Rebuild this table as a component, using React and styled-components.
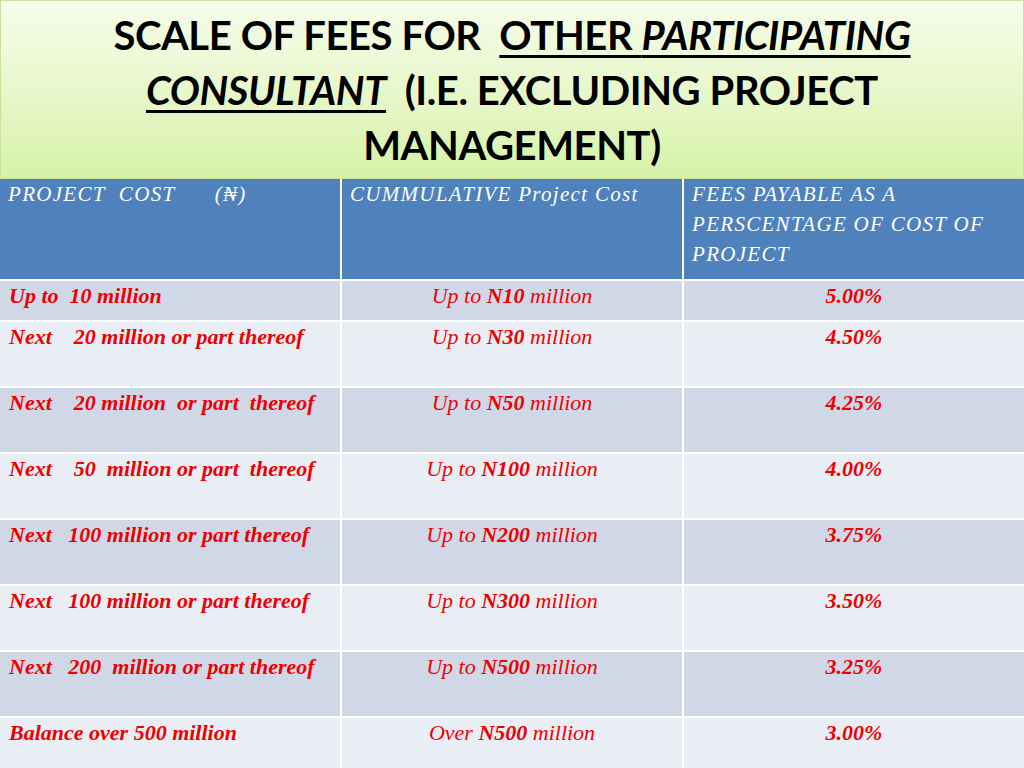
import React from "react";
import styled, { createGlobalStyle } from "styled-components";

const GlobalStyle = createGlobalStyle`
  html, body {
    margin: 0;
    padding: 0;
    background: #ffffff;
  }
  body {
    width: 1024px;
    height: 768px;
    overflow: hidden;
  }
`;

const rows = [
  { label: "Up to  10 million", amount: "10", prefix: "Up to", pct: "5.00%" },
  { label: "Next    20 million or part thereof", amount: "30", prefix: "Up to", pct: "4.50%" },
  { label: "Next    20 million  or part  thereof", amount: "50", prefix: "Up to", pct: "4.25%" },
  { label: "Next    50  million or part  thereof", amount: "100", prefix: "Up to", pct: "4.00%" },
  { label: "Next   100 million or part thereof", amount: "200", prefix: "Up to", pct: "3.75%" },
  { label: "Next   100 million or part thereof", amount: "300", prefix: "Up to", pct: "3.50%" },
  { label: "Next   200  million or part thereof", amount: "500", prefix: "Up to", pct: "3.25%" },
  { label: "Balance over 500 million", amount: "500", prefix: "Over", pct: "3.00%" },
];

const App = () => {
  return (
    <>
      <GlobalStyle />
      <Slide>
        <TitleBox>
          <Title>
            SCALE OF FEES FOR&nbsp; <U>OTHER <I>PARTICIPATING</I></U>
            <br />
            <U>
              <I>CONSULTANT</I>
            </U>
            &nbsp; (I.E. EXCLUDING PROJECT
            <br />
            MANAGEMENT)
          </Title>
        </TitleBox>
        <Table>
          <HeadCell>PROJECT&nbsp; COST&nbsp;&nbsp;&nbsp;&nbsp;&nbsp; (₦)</HeadCell>
          <HeadCell>CUMMULATIVE Project Cost</HeadCell>
          <HeadCell $wide>FEES PAYABLE AS A PERSCENTAGE OF COST OF PROJECT</HeadCell>
          {rows.map((row, idx) => (
            <React.Fragment key={idx}>
              <LabelCell $dark={idx % 2 === 0}>{row.label}</LabelCell>
              <AmountCell $dark={idx % 2 === 0}>
                {row.prefix} <b>N{row.amount}</b> million
              </AmountCell>
              <PctCell $dark={idx % 2 === 0}>{row.pct}</PctCell>
            </React.Fragment>
          ))}
        </Table>
      </Slide>
    </>
  );
};

export default App;

const Slide = styled.div`
  width: 1024px;
  height: 768px;
  display: flex;
  flex-direction: column;
  overflow: hidden;
`;

const TitleBox = styled.div`
  height: 179px;
  flex-shrink: 0;
  box-sizing: border-box;
  border: 1px solid #c8e29a;
  background: linear-gradient(180deg, #f6fcea 0%, #e6f7c8 55%, #d6f2a8 100%);
  display: flex;
  justify-content: center;
  padding-top: 7px;
`;

const Title = styled.h1`
  margin: 0;
  font-family: Lato, "Open Sans", sans-serif;
  font-weight: 700;
  font-size: 40px;
  line-height: 55px;
  text-align: center;
  color: #000000;
  letter-spacing: -0.4px;
`;

const U = styled.span`
  text-decoration: underline;
  text-decoration-thickness: 3px;
  text-underline-offset: 5px;
`;

const I = styled.span`
  font-style: italic;
`;

const Table = styled.div`
  display: grid;
  grid-template-columns: 340px 340px 1fr;
  grid-template-rows: 100px 39px repeat(6, 64px) 1fr;
  column-gap: 2px;
  row-gap: 2px;
  background: #ffffff;
  width: 1024px;
  flex: 1;
`;

const HeadCell = styled.div`
  background: #4f81bd;
  color: #ffffff;
  font-family: "Liberation Serif", serif;
  font-style: italic;
  font-size: 21px;
  line-height: 30px;
  letter-spacing: 1.3px;
  padding: ${(p) => (p.$wide ? "0 30px 0 8px" : "0 0 0 8px")};
  white-space: pre-wrap;
`;

const BodyCell = styled.div`
  background: ${(p) => (p.$dark ? "#d0d8e8" : "#e9edf4")};
  color: #ee0000;
  font-family: "Liberation Serif", serif;
  font-style: italic;
  font-size: 22px;
  line-height: 24px;
  padding-top: 3px;
  white-space: pre;
`;

const LabelCell = styled(BodyCell)`
  font-weight: 700;
  padding-left: 9px;
`;

const AmountCell = styled(BodyCell)`
  text-align: center;
  b {
    font-weight: 700;
  }
`;

const PctCell = styled(BodyCell)`
  text-align: center;
  font-weight: 700;
`;
